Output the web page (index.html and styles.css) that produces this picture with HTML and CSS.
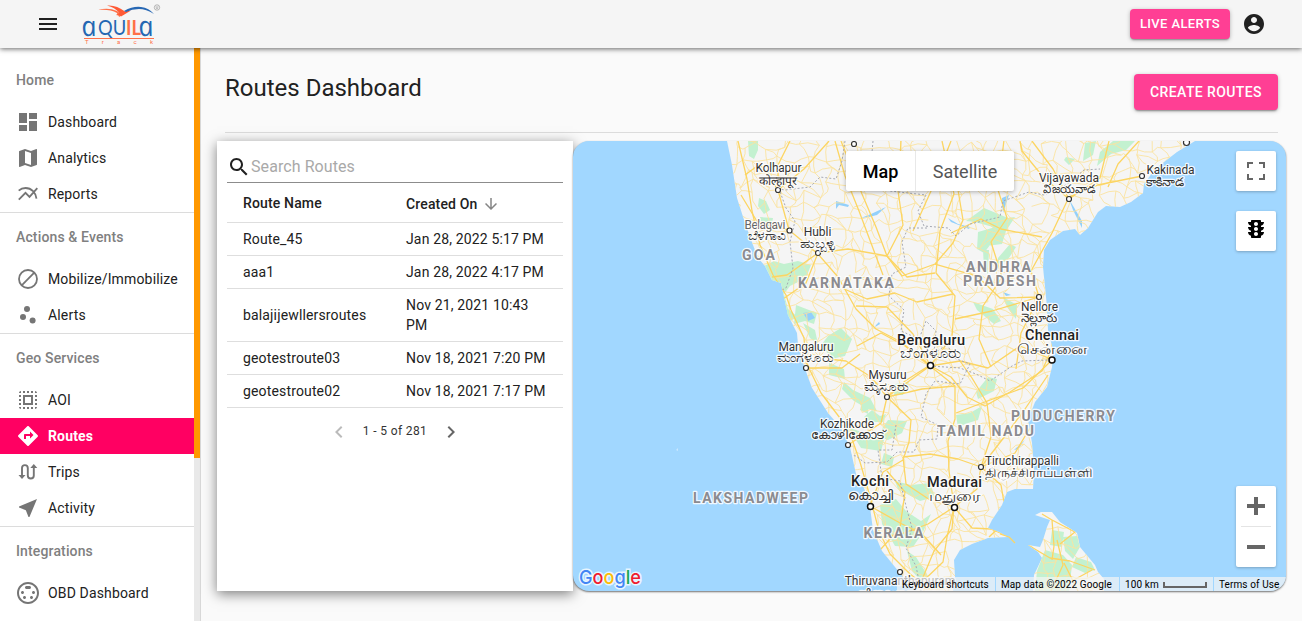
FILE: index.html
```html
<!DOCTYPE html>
<html lang="en">
<head>
<meta charset="utf-8">
<title>Routes Dashboard</title>
<link rel="stylesheet" href="styles.css">
</head>
<body>
<header class="topbar">
  <svg class="icon menu" viewBox="0 0 24 24"><path d="M3 18h18v-2H3v2zm0-5h18v-2H3v2zm0-7v2h18V6H3z"/></svg>
  <svg class="logo" viewBox="80 0 84 48">
    <path d="M98 10q10-3 19 1l4 3 9-4-11 7q0-2-3-2 2-1 1-2-7-4-19-3z" fill="#ff7048"/>
    <path d="M107 5.500q9-1 18 6l6-1-10 6q-1-2-4-2 3-1 2-2-4-5-12-7z" fill="#ff5a36"/>
    <path d="M124 11q9-5 17-4 8 1 13 7-8-5-15-5-7 0-13 3z" fill="#2868b4"/>
    <g transform="translate(83 35.500) skewX(12)"><text class="logo-name" x="0" y="0" textLength="15" lengthAdjust="spacingAndGlyphs">a</text></g>
    <text class="logo-caps" x="98" y="34.500" textLength="43" lengthAdjust="spacingAndGlyphs">QU<tspan class="logo-orange">IL</tspan></text>
    <g transform="translate(140 35.500) skewX(12)"><text class="logo-name" x="0" y="0" textLength="15" lengthAdjust="spacingAndGlyphs">a</text></g>
    <path d="M84 38.500h70" stroke="#ff7048" stroke-width="1.200"/>
    <text class="logo-sub" x="85" y="44" textLength="68">Track</text>
    <circle cx="157" cy="7.500" r="2.700" fill="none" stroke="#999" stroke-width=".7"/><path d="M155.500 7h3M156 8.300h2" stroke="#999" stroke-width=".7"/>
  </svg>
  <button class="btn btn-small">LIVE ALERTS</button>
  <svg class="icon account" viewBox="0 0 24 24"><path d="M12 2C6.480 2 2 6.480 2 12s4.480 10 10 10 10-4.480 10-10S17.520 2 12 2zm0 3c1.660 0 3 1.340 3 3s-1.340 3-3 3-3-1.340-3-3 1.340-3 3-3zm0 14.200c-2.500 0-4.710-1.280-6-3.220.03-1.990 4-3.080 6-3.080 1.990 0 5.970 1.090 6 3.080-1.290 1.940-3.500 3.220-6 3.220z"/></svg>
</header>
<div class="shell">
  <aside class="sidebar">
    <nav class="nav">
      <section class="group">
        <h3>Home</h3>
        <a class="item"><svg class="icon" viewBox="0 0 24 24"><path d="M3 13h8V3H3v10zm0 8h8v-6H3v6zm10 0h8V11h-8v10zm0-18v6h8V3h-8z"/></svg>Dashboard</a>
        <a class="item"><svg class="icon" viewBox="0 0 24 24"><path d="M20.500 3l-.16.03L15 5.100 9 3 3.360 4.900c-.21.07-.36.25-.36.48V20.500c0 .28.22.5.5.5l.16-.03L9 18.900l6 2.100 5.640-1.900c.21-.07.36-.25.36-.48V3.500c0-.28-.22-.5-.5-.5zM15 19l-6-2.110V5l6 2.110V19z"/></svg>Analytics</a>
        <a class="item"><svg class="icon line" viewBox="0 0 24 24"><path d="M2.700 8.700C4.500 7 7 6 9.600 6c5.900 0 10.300 4.700 10.900 10.700M2.800 17.700l6.700-6.800 4 4 7.800-8.700"/></svg>Reports</a>
      </section>
      <section class="group">
        <h3>Actions &amp; Events</h3>
        <a class="item"><svg class="icon line" viewBox="0 0 24 24"><circle cx="12" cy="12" r="9"/><path d="M5.700 18.300L18.300 5.700"/></svg>Mobilize/Immobilize</a>
        <a class="item"><svg class="icon" viewBox="0 0 24 24"><circle cx="11" cy="6" r="3"/><circle cx="7" cy="14" r="3"/><circle cx="16.600" cy="17.600" r="3"/></svg>Alerts</a>
      </section>
      <section class="group">
        <h3>Geo Services</h3>
        <a class="item"><svg class="icon" viewBox="0 0 24 24"><path d="M3 5h2V3c-1.100 0-2 .9-2 2zm0 8h2v-2H3v2zm4 8h2v-2H7v2zM3 9h2V7H3v2zm10-6h-2v2h2V3zm6 0v2h2c0-1.100-.9-2-2-2zM5 21v-2H3c0 1.100.9 2 2 2zm-2-4h2v-2H3v2zM9 3H7v2h2V3zm2 18h2v-2h-2v2zm8-8h2v-2h-2v2zm0 8c1.100 0 2-.9 2-2h-2v2zm0-12h2V7h-2v2zm0 8h2v-2h-2v2zm-4 4h2v-2h-2v2zm0-16h2V3h-2v2zM7 17h10V7H7v10zm2-8h6v6H9V9z"/></svg>AOI</a>
        <a class="item active"><svg class="icon" viewBox="0 0 24 24"><path d="M21.710 11.290l-9-9c-.39-.39-1.020-.39-1.410 0l-9 9c-.39.39-.39 1.020 0 1.410l9 9c.39.39 1.020.39 1.410 0l9-9c.39-.38.39-1.010 0-1.410zM14 14.500V12h-4v3H8v-4c0-.55.45-1 1-1h5V7.500l3.500 3.500-3.500 3.500z"/></svg>Routes</a>
        <a class="item"><svg class="icon" viewBox="0 0 24 24"><path d="M6 16V8a2.900 2.900 0 0 1 5.800 0v7.500a3 3 0 0 0 6 0V7" fill="none" stroke="#757575" stroke-width="1.900"/><path d="M2.500 15h7L6 19zM14.300 8h7l-3.500-4z"/></svg>Trips</a>
        <a class="item"><svg class="icon" viewBox="0 0 24 24"><path d="M21 3L3 10.530v.98l6.840 2.650L12.480 21h.98L21 3z"/></svg>Activity</a>
      </section>
      <section class="group">
        <h3>Integrations</h3>
        <a class="item"><svg class="icon" viewBox="0 0 24 24"><path d="M8 11.500c0-.83-.67-1.500-1.500-1.500S5 10.670 5 11.500 5.670 13 6.500 13 8 12.330 8 11.500zm7-5c0-.83-.67-1.500-1.500-1.500h-3C9.670 5 9 5.670 9 6.500S9.670 8 10.500 8h3c.83 0 1.500-.67 1.500-1.500zM8.500 15c-.83 0-1.500.67-1.500 1.500S7.670 18 8.500 18s1.500-.67 1.500-1.500S9.330 15 8.500 15zM12 1C5.930 1 1 5.930 1 12s4.930 11 11 11 11-4.930 11-11S18.070 1 12 1zm0 20c-4.960 0-9-4.040-9-9s4.040-9 9-9 9 4.040 9 9-4.040 9-9 9zm5.500-11c-.83 0-1.500.67-1.500 1.500s.67 1.500 1.500 1.500 1.500-.67 1.500-1.500-.67-1.500-1.500-1.500zm-2 5c-.83 0-1.500.67-1.500 1.500s.67 1.500 1.500 1.500 1.500-.67 1.500-1.500-.67-1.500-1.500-1.500z"/></svg>OBD Dashboard</a>
      </section>
    </nav>
    <div class="track"><div class="thumb"></div></div>
  </aside>
  <main class="content">
    <div class="heading">
      <h1>Routes Dashboard</h1>
      <button class="btn">CREATE ROUTES</button>
    </div>
    <div class="panels">
      <section class="card">
        <label class="search"><svg class="icon" viewBox="0 0 24 24"><path d="M15.500 14h-.79l-.28-.27C15.410 12.590 16 11.110 16 9.500 16 5.910 13.090 3 9.500 3S3 5.910 3 9.500 5.910 16 9.500 16c1.610 0 3.090-.59 4.230-1.570l.27.28v.79l5 4.990L20.490 19l-4.990-5zm-6 0C7.010 14 5 11.990 5 9.500S7.010 5 9.500 5 14 7.010 14 9.500 11.990 14 9.500 14z"/></svg><span>Search Routes</span></label>
        <div class="row head"><span>Route Name</span><span class="sort">Created On <svg class="icon" viewBox="0 0 24 24"><path d="M20 12l-1.410-1.410L13 16.170V4h-2v12.170l-5.580-5.590L4 12l8 8 8-8z"/></svg></span></div>
        <div class="row"><span>Route_45</span><span>Jan 28, 2022 5:17 PM</span></div>
        <div class="row"><span>aaa1</span><span>Jan 28, 2022 4:17 PM</span></div>
        <div class="row"><span>balajijewllersroutes</span><span>Nov 21, 2021 10:43 PM</span></div>
        <div class="row"><span>geotestroute03</span><span>Nov 18, 2021 7:20 PM</span></div>
        <div class="row"><span>geotestroute02</span><span>Nov 18, 2021 7:17 PM</span></div>
        <div class="pager">
          <svg class="icon off" viewBox="0 0 24 24"><path d="M15.410 7.410L14 6l-6 6 6 6 1.410-1.410L10.830 12z"/></svg>
          <span>1 - 5 of 281</span>
          <svg class="icon" viewBox="0 0 24 24"><path d="M10 6L8.590 7.410 13.170 12l-4.580 4.590L10 18l6-6z"/></svg>
        </div>
      </section>
      <section class="map">
        <svg class="canvas" viewBox="573 141 713 450">
          <defs>
            <clipPath id="land"><path id="landShape" d="M727 141L732 165 737 198 745 223 753 245 758 258 765 266 772 280 781 283 784 297 788 315 797 333 798 345 804 366 812 388 828 413 841 428 850 447 856 474 864 488 870 507 873 530 882 551 895 567 908 583 917 591H953L955 577 954 560 960 550 972 544 988 538 1008 537 999 532 988 528 992 520 1002 505 1007 492 1015 489H1033L1034 470 1032 443 1028 420 1035 402 1047 387 1052 367 1053 350 1048 330 1047 307 1045 287 1043 267 1044 250 1050 240 1063 231 1075 229 1080 235 1088 228 1098 212 1106 206 1120 207 1131 202 1143 193 1144 184 1155 169 1177 152 1195 141Z"/></clipPath>
            <clipPath id="lanka"><path id="lankaShape" d="M1035 515L1041 512 1052 512 1060 522 1077 533 1080 547 1095 565 1098 572 1104 579V591H1033L1034 575 1042 558 1038 552 1028 545 1040 547 1043 540 1047 527 1050 520Z"/></clipPath>
          </defs>
          <use href="#landShape" class="land"/><use href="#lankaShape" class="land"/>
          <g clip-path="url(#land)">
            <g class="park">
              <path d="M748 141h10v9l-4 9-5-3zM759 198l7 3 4 9-6 4-6-8zM760 217l13 1-1 5-11-1zM764 266l10-5 10 3 14-3 13 4-5 13-16 8-6 8 4 15 10 8-8 4-10-3-6-20-6-13zM796 305l13 5 8 3-3 11-9-3-11 3zM803 323l12 7 3 14-8-6zM828 336l13-8 11 11-7 17-14 3-9-15zM984 208l24 10 7-1-9 14-4 13-16 2 8-8-1-11-18-5-9-1zM978 232l21-6-6 15-9 12-7-4zM998 258l12-14 6 3-9 14-10 3zM983 250h6l-1 24-4-5zM973 302l20 7 8 12-7 3-17-14zM1003 297l14 8-1 14-9-12zM829 363l15 6 1 10-16-4zM862 403l7-1-1 12-8-4zM872 410l8 6 6-2-3 8-13 0-6-5zM895 384l14-2-6 13-9 0zM888 420l19 1-5 12-14 7-11-4zM976 392l12-15 9 2-3 12-16 8zM956 415l14-2 12-7-4 14-13 4-7 4zM848 427l16 6 20 7-3 11-20-3zM884 453l10 4-2 10-11-3zM895 481l16 4 19-2 5 14-15 4-22-12zM880 505l16-6 10 12 15 10 10-7-8 18-10 15-18-1-13-22zM907 551l9 6 12 19-4 8-12-13zM1066 157l9 2-6 6-5-5zM1085 143l11-2-3 14-10 6zM1100 152l13-11h22l-9 9-15 4-14 12z"/>
              <path d="M842 389l12 12 14 8 9 2-7-13-17-8-9-8zM760 286l14 12 7 14 9 5-6-18z"/>
            </g>
            <g class="water"><path d="M836 201l13 4-1 2-9-2-3 4zM861 218l10-4 15-7-9 8-8 2zM948 218l10 6 12 3-1 2-18-7zM803 313l8-1 4 6-7 3zM1002 198l7-3-6 18zM1069 199l13 22v7l-9-18zM1003 292l8 3-5 1zM876 325l3-3 1 2-5 3zM1025 440l-7 9-4 1z"/></g>
            <g id="lanes" class="lanes"></g>
            <g class="roads">
              <path d="M738 141l9 38 5 32 8 34 13 30 13 20 5 15 13 28 2 24 15 31 22 29 8 14 9 26 9 31 10 38 11 23 20 20 20 15"/>
              <path d="M790 141l-12 24 0 25 11 40 29 24 20 23 18 32 20 20 25 13 30 24 20 11 16 20 18 9 25-14 32-21 10-23 1-45-4-34 20-27 45-24 38-18 17-20 43-23"/>
              <path d="M745 175l15-11 18 26 26-21 25-28M789 230l-31-7-17-28M818 253l30-4 39 7 15 20 33-12 18-21 10-23-6-36-12-31M835 141l10 35 14 35 12 32 12 32M818 253l-31 22-15 2M818 253l-12 30-23 16M856 306l31 1 26 27 17 31-25 16-18 16-16-20-25-16-18-2M930 366l-43 31-6 26-33 22M930 366l25 20 0 33-7 22 1 30 5 35-2 23-18 22-13 31M930 366l30-5 28 7 32-22 33 14M930 366l22-29 3-41-19-23 4-42 14-37-12-53"/>
              <path d="M887 397l24 23-2 22-6 18-20 12-13 34M903 457l27-3 28 5 23 8 34-14 18-30M903 457l3 27 24 16 24 7 23-18 4-22 24-31 20-27 23-34M954 507l18 21 19 1 16 7M954 507l-26 17-27 10-28 5M954 507l-7 30-4 25-23 22M1052 360l-29 28-41 15-26 10M870 506l30 17 21 10 20 22M955 386l-33 3-35 8M991 367l-12-28 4-33 19-29-11-35 16-24-9-28 6-50M1016 369l5-36 18-36-8-26 21-38 17-36 29-12 44-9M1069 199l-25-21-22-27-2-10M1032 141l21 28 16 30 31-21 9-37M1108 187l10-23 21-23M887 256l-11-29-14-33-21-53M887 256l16-31-5-34 3-50M913 231l18-40 20-50M951 233l30-14 20 10 41 8M935 264l42 12 23 22 39-1M935 273l-28 4-20-21M842 288l25 11 28-6 22 9 36-8M955 319l37-8 47-14M857 346l24-13 24 13 25 20M860 354l-18 14-36 0"/>
              <path d="M981 467l20 18 6 35-18 17M981 467l10-30-4-34-15-25-12-17M887 471l18 21-5 36-20 22"/>
            </g>
            <g class="border"><path d="M845 141l-3 20-6 18-16-2-10 10-25 3-6-1 7 19 9 13-5 21 3 26-7 20-10 5M873 141l-3 34 20 16 36 4-8 16 6 15 24 2 8 8 14-12 30-7 3-16 26-9 15 3 22-10 18-15 16-1M927 228l-19 0-6 14 4 25-14 7-3 22 15 14-3 21 18 8 7-18 10 10-2 23 13-10 7 14 16 6-10 20-25-3-9 13-5 23 17 8-1 14-18 1-5 12-17 0-10 10-22 1-9-7-29-5-19-20-13-20M930 366l30 2 16 6 14 7 22-15 10-5 27-1M896 425l-4 25-14 0 4 28 18 3 6 25 6 22-6 20 10 18 5 25"/></g>
          </g>
          <g clip-path="url(#lanka)"><path class="park" d="M1052 530l12 2-2 15-12-2zM1063 537l14-1 3 11-7 12-8-8zM1045 550l18 5 9 10-3 26h-34l2-20zM1076 557l15 5 4 8-10 3-13-6z"/><g id="lankaLanes" class="lanes"></g><path class="roads" d="M1028 545l22 13 20 3 25 9M1042 514l10 6 2 26-2 14M1052 520l23 12-15 12M1057 540l6 25-12 26M1078 591l-14-28M1070 582l22-12"/></g>
          <path class="roads" d="M1000 534l9 3 6 6"/>
          <path d="M676 450l2-2v3zM687 502l4-4" fill="#cbe8ff"/>
          <g class="dots"><circle cx="854" cy="144" r="2.500"/><circle cx="778" cy="190" r="2.500"/><circle cx="789.500" cy="230.500" r="2.500"/><circle cx="818" cy="253" r="2.500"/><circle cx="806" cy="368" r="2.500"/><circle cx="887" cy="397" r="2.500"/><circle cx="848" cy="445" r="2.500"/><circle cx="900" cy="572" r="2.500"/><circle cx="981" cy="467" r="2.500"/><circle cx="1039" cy="297" r="2.500"/><circle cx="1069" cy="199" r="2.500"/><circle cx="1142" cy="176" r="2.500"/><circle cx="1186.500" cy="142.500" r="3"/><g class="big"><circle cx="930.500" cy="365.500" r="3"/><circle cx="1052" cy="360" r="3"/><circle cx="870.500" cy="506.500" r="3"/><circle cx="954.500" cy="507.500" r="3"/></g></g>
          <g class="city">
            <text x="778.500" y="172" textLength="46">Kolhapur</text><text x="778" y="185" textLength="38" lengthAdjust="spacingAndGlyphs">कोल्हापूर</text>
            <text x="765" y="229" class="soft" textLength="41">Belagavi</text><text x="767" y="240" textLength="38" lengthAdjust="spacingAndGlyphs">ಬೆಳಗಾವಿ</text>
            <text x="817.500" y="236">Hubli</text><text x="818" y="248" textLength="36" lengthAdjust="spacingAndGlyphs">ಹುಬ್ಬಳ್ಳಿ</text>
            <text x="806" y="351" textLength="55">Mangaluru</text><text x="805.500" y="362" textLength="57" lengthAdjust="spacingAndGlyphs">ಮಂಗಳೂರು</text>
            <text x="887.500" y="379" textLength="38">Mysuru</text><text x="886.500" y="391" textLength="45" lengthAdjust="spacingAndGlyphs">ಮೈಸೂರು</text>
            <text x="847" y="428" textLength="54">Kozhikode</text><text x="848" y="439" textLength="74" lengthAdjust="spacingAndGlyphs">കോഴിക്കോട്</text>
            <text x="1039.500" y="311" textLength="37">Nellore</text><text x="1039" y="322" textLength="37" lengthAdjust="spacingAndGlyphs">నెల్లూరు</text>
            <text x="1069" y="182" textLength="60">Vijayawada</text><text x="1069.500" y="193" textLength="53" lengthAdjust="spacingAndGlyphs">విజయవాడ</text>
            <text x="1170.500" y="174" textLength="48">Kakinada</text><text x="1165" y="186" textLength="38" lengthAdjust="spacingAndGlyphs">కాకినాడ</text>
            <text x="1022" y="465" textLength="74">Tiruchirappalli</text><text x="1038.500" y="477" textLength="107" lengthAdjust="spacingAndGlyphs">திருச்சிராப்பள்ளி</text>
            <text x="900" y="585">Thiruvananthapuram</text><text x="900" y="598">തിരുവനന്തപുരം</text>
            <g class="metro"><text x="931" y="345" textLength="68">Bengaluru</text><text x="1052" y="340" textLength="54">Chennai</text><text x="870" y="486" textLength="38">Kochi</text><text x="954.500" y="487" textLength="55">Madurai</text></g>
            <g class="native"><text x="930.500" y="358" textLength="61" lengthAdjust="spacingAndGlyphs">ಬೆಂಗಳೂರು</text><text x="1052.500" y="354" textLength="71" lengthAdjust="spacingAndGlyphs">சென்னை</text><text x="870.500" y="500" textLength="46" lengthAdjust="spacingAndGlyphs">കൊച്ചി</text><text x="954.500" y="501" textLength="51" lengthAdjust="spacingAndGlyphs">மதுரை</text></g>
          </g>
          <g class="state"><text x="758.500" y="260" textLength="33">GOA</text><text x="846" y="288" textLength="96">KARNATAKA</text><text x="998.500" y="272" textLength="65">ANDHRA</text><text x="999.500" y="286" textLength="73">PRADESH</text><text x="1063" y="421" textLength="104">PUDUCHERRY</text><text x="985.500" y="436" textLength="97">TAMIL NADU</text><text x="750.500" y="503" textLength="115">LAKSHADWEEP</text><text x="893.500" y="538" textLength="60">KERALA</text></g>
          <text class="google" x="579" y="584" textLength="62" lengthAdjust="spacingAndGlyphs"><tspan fill="#4285f4">G</tspan><tspan fill="#f01c2e">o</tspan><tspan fill="#fbbc05">o</tspan><tspan fill="#4285f4">g</tspan><tspan fill="#18a853">l</tspan><tspan fill="#f01c2e">e</tspan></text>
        </svg>
        <div class="types"><span class="on">Map</span><span>Satellite</span></div>
        <div class="tools">
          <button class="tool"><svg viewBox="0 0 18 18"><path d="M0 0v6h2V2h4V0zM16 0h-4v2h4v4h2V0zM16 16h-4v2h6v-6h-2zM2 12H0v6h6v-2H2z"/></svg></button>
          <button class="tool square"><svg class="traffic" viewBox="0 0 24 24"><path d="M20 10h-3V8.860c1.720-.45 3-2 3-3.860h-3V4c0-.55-.45-1-1-1H8c-.55 0-1 .45-1 1v1H4c0 1.860 1.280 3.410 3 3.860V10H4c0 1.860 1.280 3.410 3 3.860V15H4c0 1.860 1.280 3.410 3 3.860V20c0 .55.45 1 1 1h8c.55 0 1-.45 1-1v-1.140c1.720-.45 3-2 3-3.860h-3v-1.140c1.720-.45 3-2 3-3.860zm-8 9c-1.110 0-2-.9-2-2s.89-2 2-2c1.100 0 2 .9 2 2s-.89 2-2 2zm0-5c-1.110 0-2-.9-2-2s.89-2 2-2c1.100 0 2 .9 2 2s-.89 2-2 2zm0-5c-1.110 0-2-.9-2-2 0-1.110.89-2 2-2 1.100 0 2 .89 2 2 0 1.100-.9 2-2 2z"/></svg></button>
        </div>
        <div class="zoom"><button><svg viewBox="0 0 18 18"><path d="M7 0h4v7h7v4h-7v7H7v-7H0V7h7z"/></svg></button><hr><button><svg viewBox="0 0 18 18"><path d="M0 7h18v4H0z"/></svg></button></div>
        <div class="credits"><span class="keys">Keyboard shortcuts</span><span class="data">Map data ©2022 Google</span><span class="scale">100 km<i></i></span><span class="terms">Terms of Use</span></div>
      </section>
    </div>
  </main>
</div>
<script src="lanes.js"></script>
</body>
</html>
```
FILE: styles.css
```css
* { box-sizing: border-box; }
body { margin: 0; width: 1302px; height: 621px; overflow: hidden; background: #fafafa; color: #212121; font-family: Roboto, sans-serif; font-size: 14px; }
h1, h3 { margin: 0; font-weight: 400; }
button { border: 0; padding: 0; font-family: inherit; }
svg { display: block; }
.icon { width: 24px; height: 24px; flex: none; fill: currentColor; }
.topbar { position: relative; z-index: 2; height: 48px; background: #f5f5f5; display: flex; align-items: center; padding: 0 36px; box-shadow: 0 1px 5px rgba(0,0,0,.6); }
.logo { width: 84px; height: 48px; margin: 0 auto 0 20px; }
.logo-name { font-family: "Open Sans", sans-serif; font-style: italic; font-size: 28px; fill: #2467b2; }
.logo-caps { font-family: Lato, sans-serif; font-size: 21px; fill: #2467b2; }
.logo-orange { fill: #ff7048; font-weight: 700; }
.logo-sub { font-size: 6px; fill: #ff7048; }
.btn { height: 36px; width: 144px; border-radius: 4px; background: #ff3f94; color: #fff; font-size: 14px; font-weight: 500; letter-spacing: .4px; box-shadow: 0 2px 2px -1px rgba(0,0,0,.35), 0 1px 4px rgba(0,0,0,.25); }
.btn-small { width: 100px; height: 30px; font-size: 13px; letter-spacing: .37px; margin-right: 12px; padding-bottom: 1px; }
.shell { display: flex; height: 573px; }
.sidebar { width: 201px; flex: none; display: flex; background: #fff; border-right: 1px solid #d8d8d8; }
.nav { width: 194px; padding-top: 8px; }
.group + .group { border-top: 1px solid #dcdcdc; }
.group h3 { height: 48px; padding-left: 16px; line-height: 48px; font-size: 14px; font-weight: 500; color: #808080; letter-spacing: .14px; }
.item { height: 36px; padding-left: 16px; display: flex; align-items: center; gap: 8px; font-size: 14px; letter-spacing: .15px; }
.item .icon { color: #757575; }
.icon.line { fill: none; stroke: currentColor; stroke-width: 1.800; }
.item.active { background: #ff0062; color: #fff; font-weight: 700; }
.item.active .icon { color: #fff; }
.track { width: 6px; background: #e9e9e9; }
.thumb { height: 410px; background: #ff9800; }
.content { width: 1101px; padding: 24px 16px 30px; }
.heading { height: 61px; margin: 0 8px 8px; padding-bottom: 22px; display: flex; align-items: center; justify-content: space-between; border-bottom: 1px solid #dcdcdc; }
.heading .btn { margin-top: 2px; }
.heading h1 { font-size: 24px; line-height: 32px; margin-top: -6px; }
.panels { display: flex; height: 450px; }
.card { width: 356px; padding: 10px; background: #fff; box-shadow: 0 3px 12px rgba(0,0,0,.5); }
.search { height: 32px; display: flex; align-items: center; border-bottom: 1px solid #8c8c8c; color: #a9a9a9; font-size: 16px; letter-spacing: .08px; }
.search .icon { color: #212121; }
.row { display: grid; grid-template-columns: 163px 141px; padding: 6px 16px; align-items: center; border-bottom: 1px solid #dedede; line-height: 20px; letter-spacing: .15px; }
.row.head { height: 40px; font-weight: 500; }
.sort { display: flex; align-items: center; gap: 5px; padding-top: 2px; }
.sort .icon { width: 18px; height: 18px; color: #858585; }
.pager { height: 48px; display: flex; align-items: center; justify-content: center; gap: 12px; font-size: 12px; letter-spacing: .36px; color: #333; }
.pager span { padding-bottom: 2px; }
.pager .icon { color: #666; }
.pager .icon.off { color: #bbb; }
.map { width: 713px; position: relative; overflow: hidden; border-radius: 16px; background: #a1d7ff; box-shadow: 0 1px 2px rgba(0,0,0,.55); }
.canvas { width: 713px; height: 450px; }
.land { fill: #f5f5f5; }
.park { fill: #c3f1d0; }
.water { fill: #93d0fb; }
.lanes { fill: none; stroke: #fbe3a0; stroke-width: .9; }
.roads { fill: none; stroke: #fcd562; stroke-width: 1.300; stroke-linejoin: round; }
.border { fill: none; stroke: #a5a8b2; stroke-width: 1; stroke-dasharray: 2 2; }
.dots { fill: #fff; stroke: #333; stroke-width: 1.200; }
.big { stroke: #111; stroke-width: 1.500; }
.city, .state { text-anchor: middle; paint-order: stroke; stroke: rgba(255,255,255,.85); stroke-width: 2.500px; stroke-linejoin: round; }
.city { font-size: 12px; fill: #333; }
.soft { fill: #666; }
.metro { font-size: 14.500px; font-weight: 500; fill: #222; }
.native { font-size: 14px; }
.state { font-size: 14px; font-weight: 700; fill: #8b8b90; }
.google { font-family: Inter, sans-serif; font-size: 19px; font-weight: 500; paint-order: stroke; stroke: rgba(255,255,255,.75); stroke-width: 3px; }
.types { position: absolute; left: 273px; top: 10px; display: flex; height: 40px; background: #fff; border-radius: 2px; box-shadow: 0 1px 4px rgba(0,0,0,.3); font-size: 18px; line-height: 42px; text-align: center; color: #565656; }
.types span { width: 98px; }
.types .on { width: 70px; font-weight: 500; color: #000; border-right: 1px solid #e8e8e8; }
.tools { position: absolute; right: 10px; top: 10px; display: grid; gap: 20px; }
.tool { width: 40px; height: 40px; background: #fff; border-radius: 2px; box-shadow: 0 1px 3px rgba(0,0,0,.25); display: flex; align-items: center; justify-content: center; fill: #666; }
.tool svg { width: 18px; height: 18px; }
.tool .traffic { width: 24px; height: 24px; fill: #000; margin-bottom: 4px; }
.zoom { position: absolute; right: 10px; bottom: 24px; width: 40px; height: 81px; background: #fff; border-radius: 2px; box-shadow: 0 1px 3px rgba(0,0,0,.25); }
.zoom button { width: 40px; height: 40px; display: flex; align-items: center; justify-content: center; background: none; fill: #666; }
.zoom svg { width: 18px; height: 18px; }
.zoom hr { width: 30px; height: 1px; margin: 0 auto; border: 0; background: #e4e4e4; }
.credits { position: absolute; right: 0; bottom: 0; height: 14px; display: flex; gap: 1px; font-size: 10px; line-height: 15px; letter-spacing: .1px; color: #000; white-space: nowrap; }
.credits span { padding-left: 5px; background: rgba(245,245,245,.7); }
.keys { width: 98px; letter-spacing: 0; }
.data { width: 123px; }
.scale { width: 93px; display: flex; gap: 4px; }
.scale i { width: 44px; height: 6px; margin-top: 5px; border: 2px solid #666; border-top: 0; }
.terms { width: 72px; }
```
FILE: lanes.js
```js
// Fills the land areas with an irregular web of minor roads.
(function () {
  var seed = 41;
  function rnd() { seed = (seed * 16807) % 2147483647; return seed / 2147483647; }
  function web(id, x0, y0, x1, y1, step) {
    var cols = Math.ceil((x1 - x0) / step), rows = Math.ceil((y1 - y0) / step), p = [], d = "";
    for (var r = 0; r <= rows; r++) {
      p.push([]);
      for (var c = 0; c <= cols; c++) {
        p[r].push([x0 + (c + rnd() * 0.9) * step, y0 + (r + rnd() * 0.9) * step]);
      }
    }
    function link(a, b) {
      var mx = (a[0] + b[0]) / 2 + (rnd() - 0.5) * 5, my = (a[1] + b[1]) / 2 + (rnd() - 0.5) * 5;
      d += "M" + a[0].toFixed(1) + " " + a[1].toFixed(1) + "L" + mx.toFixed(1) + " " + my.toFixed(1) + " " + b[0].toFixed(1) + " " + b[1].toFixed(1);
    }
    for (r = 0; r < rows; r++) {
      for (c = 0; c < cols; c++) {
        if (rnd() < 0.82) link(p[r][c], p[r][c + 1]);
        if (rnd() < 0.82) link(p[r][c], p[r + 1][c]);
        if (rnd() < 0.3) link(p[r][c], p[r + 1][c + 1]);
      }
    }
    var path = document.createElementNS("http://www.w3.org/2000/svg", "path");
    path.setAttribute("d", d);
    document.getElementById(id).appendChild(path);
  }
  web("lanes", 715, 130, 1210, 600, 12);
  web("lankaLanes", 1020, 505, 1110, 600, 15);
})();
```
